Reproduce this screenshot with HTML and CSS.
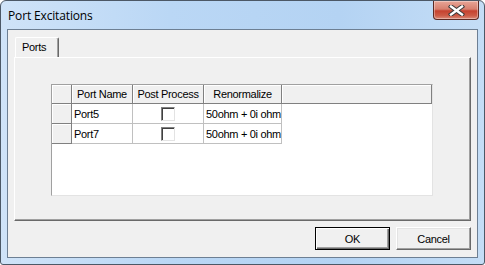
FILE: index.html
```html
<!DOCTYPE html>
<html>
<head>
<meta charset="utf-8">
<link rel="stylesheet" href="styles.css">
</head>
<body>
<div class="window">
  <div class="titlebar">
    <span class="title">Port Excitations</span>
    <div class="close">
      <svg width="17" height="11" viewBox="0 0 17 11">
        <path d="M3 1.5 L14 9.5 M14 1.5 L3 9.5" stroke="#3a3a3a" stroke-width="4.4" stroke-linecap="square" fill="none"/>
        <path d="M3 1.5 L14 9.5 M14 1.5 L3 9.5" stroke="#ffffff" stroke-width="2.4" stroke-linecap="square" fill="none"/>
      </svg>
    </div>
  </div>
  <div class="client">
    <div class="tabs">
      <div class="tab">Ports</div>
    </div>
    <div class="panel">
      <div class="grid">
        <div class="row head">
          <div class="cell rh hc"></div>
          <div class="cell c1 hc">Port Name</div>
          <div class="cell c2 hc">Post Process</div>
          <div class="cell c3 hc">Renormalize</div>
          <div class="cell fill hc"></div>
        </div>
        <div class="row">
          <div class="cell rh hc"></div>
          <div class="cell c1">Port5</div>
          <div class="cell c2 center"><span class="check"></span></div>
          <div class="cell c3">50ohm + 0i ohm</div>
        </div>
        <div class="row">
          <div class="cell rh hc"></div>
          <div class="cell c1">Port7</div>
          <div class="cell c2 center"><span class="check"></span></div>
          <div class="cell c3">50ohm + 0i ohm</div>
        </div>
      </div>
    </div>
    <div class="buttons">
      <button class="btn default">OK</button>
      <button class="btn">Cancel</button>
    </div>
  </div>
</div>
</body>
</html>
```
FILE: styles.css
```css
html, body {
  margin: 0;
  padding: 0;
  background: #ffffff;
}
.window {
  width: 485px;
  height: 265px;
  box-sizing: border-box;
  border: 1px solid #4c5866;
  border-radius: 6px 6px 3px 3px;
  background: linear-gradient(90deg, #cfe3f8 0%, #bad7f5 35%, #b4d3f3 70%, #c4ddf6 100%);
  display: flex;
  flex-direction: column;
  padding: 0 6px 6px 6px;
  overflow: hidden;
  position: relative;
}
.titlebar {
  height: 28px;
  display: flex;
  align-items: center;
  position: relative;
}
.title {
  font-family: "Open Sans", "Noto Sans", sans-serif;
  font-size: 12px;
  letter-spacing: -0.15px;
  color: #000;
  margin-left: 1px;
  margin-top: 0;
}
.close {
  position: absolute;
  right: -1px;
  top: 0;
  width: 46px;
  height: 19px;
  box-sizing: border-box;
  border: 1px solid #5c2a24;
  border-top: none;
  border-radius: 0 0 4px 4px;
  background: linear-gradient(180deg, #e8a597 0%, #d7806f 45%, #c5422f 55%, #cc5a45 80%, #d98a78 100%);
  display: flex;
  align-items: center;
  justify-content: center;
  box-shadow: inset 0 0 0 1px rgba(255,255,255,0.35);
}
.client {
  flex: 1;
  border: 1px solid #6d7f93;
  background: #f0f0f0;
  display: flex;
  flex-direction: column;
  padding: 7px 5px 0 6px;
  font-family: "Liberation Sans", Arial, sans-serif;
  font-size: 11px;
  letter-spacing: -0.3px;
  color: #000;
}
.tabs {
  display: flex;
  height: 20px;
  position: relative;
  z-index: 1;
}
.tab {
  margin-left: 1px;
  width: 44px;
  height: 20px;
  box-sizing: border-box;
  border-top: 1px solid #fff;
  border-left: 1px solid #fff;
  border-right: 1px solid #696969;
  box-shadow: inset -1px 0 0 #a0a0a0;
  border-radius: 2px 2px 0 0;
  background: #f0f0f0;
  padding: 3px 0 0 6px;
}
.panel {
  width: 457px;
  height: 164px;
  box-sizing: border-box;
  border-top: 1px solid #fff;
  border-left: 1px solid #fff;
  border-right: 1px solid #696969;
  border-bottom: 1px solid #696969;
  box-shadow: inset -1px -1px 0 #a0a0a0;
  padding: 26px 0 0 36px;
}
.grid {
  width: 382px;
  height: 112px;
  box-sizing: border-box;
  border-top: 1px solid #a0a0a0;
  border-left: 1px solid #a0a0a0;
  border-right: 1px solid #e3e3e3;
  border-bottom: 1px solid #e3e3e3;
  background: #fff;
}
.row {
  display: flex;
  height: 20px;
}
.row.head {
  height: 19px;
}
.cell {
  box-sizing: border-box;
  height: 100%;
  border-right: 1px solid #c0c0c0;
  border-bottom: 1px solid #c0c0c0;
  padding: 4px 0 0 2px;
  white-space: nowrap;
  overflow: hidden;
}
.hc {
  background: #f0f0f0;
  border-right: 1px solid #808080;
  border-bottom: 1px solid #808080;
  box-shadow: inset 1px 1px 0 #fff;
  text-align: center;
  padding: 3px 0 0 0;
}
.rh { width: 20px; }
.c1 { width: 61px; }
.c2 { width: 71px; }
.c3 { width: 78px; }
.fill { flex: 1; }
.center {
  display: flex;
  justify-content: center;
  padding: 3px 0 0 0;
}
.check {
  display: block;
  width: 14px;
  height: 14px;
  box-sizing: border-box;
  background: #fff;
  border-top: 1px solid #808080;
  border-left: 1px solid #808080;
  border-right: 1px solid #e3e3e3;
  border-bottom: 1px solid #e3e3e3;
  box-shadow: inset 1px 1px 0 #404040;
}
.buttons {
  display: flex;
  justify-content: flex-end;
  gap: 6px;
  margin-top: 6px;
  width: 457px;
}
.btn {
  width: 75px;
  height: 23px;
  box-sizing: border-box;
  background: #f0f0f0;
  border-top: 1px solid #fff;
  border-left: 1px solid #fff;
  border-right: 1px solid #696969;
  border-bottom: 1px solid #696969;
  box-shadow: inset -1px -1px 0 #a0a0a0, inset 1px 1px 0 #e3e3e3;
  font-family: "Liberation Sans", Arial, sans-serif;
  font-size: 11px;
  letter-spacing: -0.3px;
  color: #000;
  padding: 0;
  margin: 0;
}
.btn.default {
  border: 1px solid #000;
  box-shadow: inset 1px 1px 0 #fff, inset -1px -1px 0 #696969, inset -2px -2px 0 #a0a0a0;
}
```
